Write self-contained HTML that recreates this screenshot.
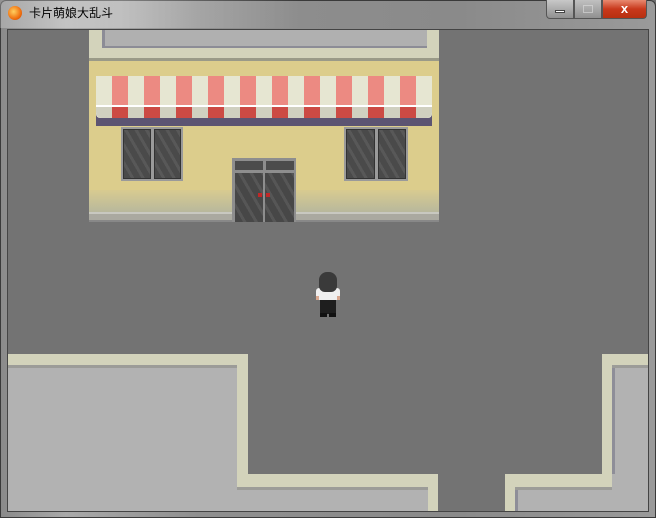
<!DOCTYPE html>
<html><head><meta charset="utf-8"><style>
*{margin:0;padding:0;box-sizing:border-box}
body{width:656px;height:518px;overflow:hidden;background:#6e6e6e;position:relative;font-family:"Liberation Sans","Noto Sans CJK SC",sans-serif}
.a{position:absolute}
</style></head><body>
<div class="a" style="left:0;top:0;width:656px;height:518px;border-radius:6px 6px 0 0;background:linear-gradient(90deg,#8a8a8a,#a9a9a9 10%,#8f8f8f 30%,#8a8a8a 70%,#9a9a9a);border:1px solid #3a3a3a"></div>
<div class="a" style="left:0;top:0;width:300px;height:28px;background:linear-gradient(90deg,rgba(255,255,255,.25),rgba(255,255,255,.35) 40%,rgba(255,255,255,0))"></div>
<div class="a" style="left:8px;top:6px;width:14px;height:14px;border-radius:50%;background:radial-gradient(circle at 40% 40%,#ffd060,#f07010 60%,#c04000)"></div>
<div class="a" style="left:29px;top:5px;font-size:12px;color:#000;line-height:16px">卡片萌娘大乱斗</div>
<div class="a" style="left:546px;top:0;width:28px;height:19px;border:1px solid #555;border-top:none;border-radius:0 0 0 4px;background:linear-gradient(#c8c8c8,#909090)"></div>
<div class="a" style="left:555px;top:10px;width:10px;height:3px;background:#fff;border:1px solid #444"></div>
<div class="a" style="left:574px;top:0;width:28px;height:19px;border:1px solid #555;border-top:none;background:linear-gradient(#c0c0c0,#909090)"></div>
<div class="a" style="left:583px;top:5px;width:10px;height:8px;border:1px solid #ddd;opacity:.6"></div>
<div class="a" style="left:602px;top:0;width:45px;height:19px;border:1px solid #555;border-top:none;border-radius:0 0 4px 0;background:linear-gradient(#e88a70,#c8391c 50%,#b83010);color:#fff;font-weight:bold;font-size:13px;text-align:center;line-height:17px">x</div>
<div class="a" style="left:7px;top:29px;width:642px;height:483px;border:1px solid #444;background:#737373;overflow:hidden">
 <div style="position:relative;left:-8px;top:-30px;width:656px;height:518px">
  <div class="a" style="left:89px;top:30px;width:350px;height:31px;background:#d3d3bb"></div>
  <div class="a" style="left:102px;top:30px;width:325px;height:18px;background:#b0b0b0;border-left:3px solid #8c8c96;border-bottom:2px solid #8c8c96"></div>
  <div class="a" style="left:89px;top:58px;width:350px;height:3px;background:#9a9a88"></div>
  <div class="a" style="left:89px;top:61px;width:350px;height:161px;background:#dccd8c"></div>
  <div class="a" style="left:89px;top:190px;width:350px;height:22px;background:linear-gradient(#d8cb90,#b8b89c)"></div>
  <div class="a" style="left:89px;top:212px;width:350px;height:10px;background:#aaa9a0;border-top:2px solid #c8c8c0;border-bottom:2px solid #888"></div>
  <div class="a" style="left:96px;top:76px;width:336px;height:50px;background:#5c5472"></div>
  <div class="a" style="left:96px;top:76px;width:336px;height:42px;background:repeating-linear-gradient(90deg,#e6e6d2 0 16px,#ec8a82 16px 32px);border-radius:0 0 4px 4px"></div>
  <div class="a" style="left:96px;top:105px;width:336px;height:2px;background:#fff"></div>
  <div class="a" style="left:96px;top:107px;width:336px;height:11px;background:repeating-linear-gradient(90deg,#d0d0c0 0 16px,#cc4a44 16px 32px);border-radius:0 0 6px 6px"></div>
  <div class="a" style="left:121px;top:127px;width:62px;height:54px;background:#9a9a9a;padding:2px"><div style="display:flex;gap:3px;height:100%"><div style="flex:1;background:repeating-linear-gradient(60deg,#4a4a4a 0 6px,#585858 6px 9px);border:1px solid #333"></div><div style="flex:1;background:repeating-linear-gradient(60deg,#4a4a4a 0 6px,#585858 6px 9px);border:1px solid #333"></div></div></div>
  <div class="a" style="left:344px;top:127px;width:64px;height:54px;background:#9a9a9a;padding:2px"><div style="display:flex;gap:3px;height:100%"><div style="flex:1;background:repeating-linear-gradient(60deg,#4a4a4a 0 6px,#585858 6px 9px);border:1px solid #333"></div><div style="flex:1;background:repeating-linear-gradient(60deg,#4a4a4a 0 6px,#585858 6px 9px);border:1px solid #333"></div></div></div>
  <div class="a" style="left:232px;top:158px;width:64px;height:64px;background:#8e8e8e"></div>
  <div class="a" style="left:235px;top:161px;width:28px;height:9px;background:#4c4c4c"></div>
  <div class="a" style="left:266px;top:161px;width:28px;height:9px;background:#4c4c4c"></div>
  <div class="a" style="left:235px;top:173px;width:28px;height:49px;background:repeating-linear-gradient(60deg,#474747 0 7px,#565656 7px 10px)"></div>
  <div class="a" style="left:265px;top:173px;width:29px;height:49px;background:repeating-linear-gradient(60deg,#474747 0 7px,#565656 7px 10px)"></div>
  <div class="a" style="left:258px;top:193px;width:4px;height:4px;background:#c02828"></div>
  <div class="a" style="left:266px;top:193px;width:4px;height:4px;background:#c02828"></div>
  <!-- character -->
  <div class="a" style="left:316px;top:288px;width:24px;height:12px;background:#f0f0f0;border-radius:3px"></div>
  <div class="a" style="left:316px;top:296px;width:3px;height:4px;background:#d8a890"></div>
  <div class="a" style="left:337px;top:296px;width:3px;height:4px;background:#d8a890"></div>
  <div class="a" style="left:319px;top:272px;width:18px;height:20px;border-radius:8px 8px 6px 6px;background:#3a3a3a"></div>
  <div class="a" style="left:320px;top:300px;width:16px;height:14px;background:#1e1e1e"></div>
  <div class="a" style="left:320px;top:313px;width:7px;height:4px;background:#111"></div>
  <div class="a" style="left:329px;top:313px;width:7px;height:4px;background:#111"></div>
  <!-- lower blocks -->
  <div class="a" style="left:8px;top:354px;width:240px;height:160px;background:#d3d3bb"></div>
  <div class="a" style="left:8px;top:365px;width:229px;height:6px;background:#9c9c98"></div>
  <div class="a" style="left:8px;top:368px;width:229px;height:150px;background:#b2b2b2"></div>
  <div class="a" style="left:237px;top:474px;width:201px;height:40px;background:#d3d3bb"></div>
  <div class="a" style="left:237px;top:487px;width:191px;height:4px;background:#9c9c98"></div>
  <div class="a" style="left:237px;top:490px;width:191px;height:30px;background:#b2b2b2"></div>
  <div class="a" style="left:602px;top:354px;width:50px;height:125px;background:#d3d3bb"></div>
  <div class="a" style="left:505px;top:474px;width:107px;height:40px;background:#d3d3bb"></div>
  <div class="a" style="left:612px;top:365px;width:40px;height:4px;background:#9c9c98"></div>
  <div class="a" style="left:612px;top:368px;width:40px;height:110px;background:#b2b2b2;border-left:3px solid #8e8e98"></div>
  <div class="a" style="left:515px;top:487px;width:100px;height:4px;background:#9c9c98"></div>
  <div class="a" style="left:515px;top:490px;width:140px;height:30px;background:#b2b2b2;border-left:3px solid #8e8e98"></div>
  <div class="a" style="left:612px;top:474px;width:40px;height:20px;background:#b2b2b2"></div>
 </div>
</div>
</body></html>
